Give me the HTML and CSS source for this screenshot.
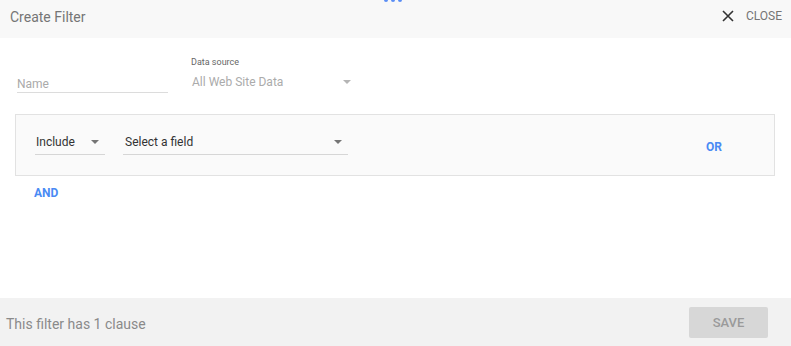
FILE: index.html
```html
<!DOCTYPE html>
<html>
<head>
  <title>Create Filter</title>
  <link rel="stylesheet" href="styles.css">
</head>
<body>

  <div class="dialog">
    <div class="loader"><span></span><span></span><span></span></div>

    <div class="dialog-header">
      <span class="title">Create Filter</span>
      <div class="close">
        <svg width="12" height="12" viewBox="0 0 12 12"><path d="M1 1L11 11M11 1L1 11" stroke="#333" stroke-width="1.6"/></svg>
        <span>CLOSE</span>
      </div>
    </div>

    <div class="dialog-body">
      <div class="top-row">
        <div class="name-field">Name</div>
        <div class="source-field">
          <div class="source-label">Data source</div>
          <div class="source-value">
            <span>All Web Site Data</span>
            <span class="arrow light"></span>
          </div>
        </div>
      </div>

      <div class="clause">
        <div class="select include">
          <span>Include</span>
          <span class="arrow"></span>
        </div>
        <div class="select field">
          <span>Select a field</span>
          <span class="arrow"></span>
        </div>
        <div class="or-link">OR</div>
      </div>

      <div class="and-link">AND</div>
    </div>

    <div class="dialog-footer">
      <span class="count">This filter has 1 clause</span>
      <button class="save" disabled>SAVE</button>
    </div>
  </div>

</body>
</html>
```

FILE: styles.css
```css
body {
  margin: 0;
  font-family: Roboto, "Liberation Sans", sans-serif;
  background: #fff;
}

.dialog {
  position: relative;
  width: 791px;
  height: 346px;
  display: flex;
  flex-direction: column;
}

/* bit of the loading dots peeking in at the top */
.loader {
  position: absolute;
  top: -2px;
  left: 384px;
  display: flex;
  gap: 3px;
}

.loader span {
  width: 4px;
  height: 4px;
  border-radius: 50%;
  background: #5b8ef5;
}

.dialog-header {
  height: 38px;
  background: #f8f8f8;
  display: flex;
  align-items: center;
  justify-content: space-between;
  padding: 0 9px 0 10px;
  box-sizing: border-box;
}

.title {
  font-size: 14px;
  color: #757575;
  margin-top: -4px;
}

.close {
  display: flex;
  align-items: center;
  gap: 12px;
  font-size: 12px;
  color: #757575;
  margin-top: -6px;
}

.dialog-body {
  flex: 1;
  padding: 0 16px 0 15px;
}

.top-row {
  display: flex;
  gap: 23px;
  padding-top: 16px;
  height: 60px;
  padding-left: 2px;
}

.name-field {
  width: 151px;
  height: 39px;
  box-sizing: border-box;
  padding-top: 23px;
  border-bottom: 1px solid #dcdcdc;
  font-size: 12px;
  color: #aaa;
}

.source-field {
  width: 164px;
}

.source-label {
  font-size: 9px;
  color: #666;
  line-height: 14px;
  margin-top: 1px;
}

.source-value {
  display: flex;
  justify-content: space-between;
  align-items: center;
  font-size: 12px;
  color: #ababab;
  margin-top: 6px;
  padding-left: 1px;
  padding-right: 4px;
}

.arrow {
  width: 0;
  height: 0;
  border-left: 4px solid transparent;
  border-right: 4px solid transparent;
  border-top: 4px solid #757575;
}

.arrow.light {
  border-top-color: #b5b5b5;
}

.clause {
  height: 62px;
  box-sizing: border-box;
  border: 1px solid #e2e2e2;
  background: #fafafa;
  display: flex;
  align-items: flex-start;
  padding: 16px 0 0 19px;
  gap: 18px;
}

.select {
  height: 24px;
  box-sizing: border-box;
  border-bottom: 1px solid #d6d6d6;
  display: flex;
  justify-content: space-between;
  align-items: center;
  font-size: 12px;
  color: #333;
  padding: 0 6px 1px 1px;
}

.include {
  width: 70px;
}

.field {
  width: 225px;
  padding-left: 2px;
}

.or-link {
  margin-left: auto;
  margin-right: 52px;
  margin-top: 9px;
  font-size: 12px;
  font-weight: bold;
  color: #4a8af4;
}

.and-link {
  margin-top: 10px;
  padding-left: 19px;
  font-size: 12px;
  font-weight: bold;
  color: #4a8af4;
}

.dialog-footer {
  height: 48px;
  background: #f2f2f2;
  display: flex;
  align-items: center;
  justify-content: space-between;
  padding: 0 23px 0 6px;
}

.count {
  font-size: 14px;
  color: #8a8a8a;
  margin-top: 4px;
}

.save {
  width: 79px;
  height: 31px;
  border: none;
  border-radius: 2px;
  background: #d7d7d7;
  color: #9a9a9a;
  font-family: Roboto, "Liberation Sans", sans-serif;
  font-size: 13px;
  font-weight: 500;
  margin-top: 1px;
}
```
